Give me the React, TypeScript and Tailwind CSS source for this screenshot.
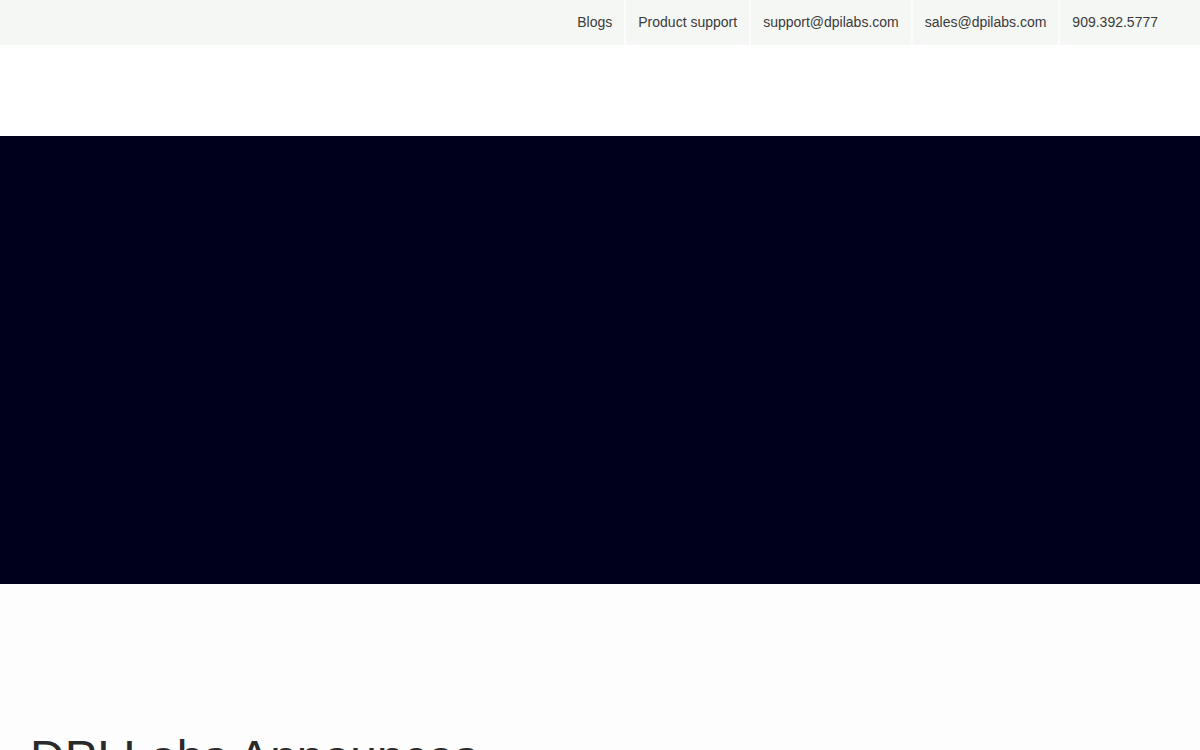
import React from "react";

const items = ["Blogs", "Product support", "support@dpilabs.com", "sales@dpilabs.com", "909.392.5777"];

export default function App() {
  return (
    <div className="w-full min-h-[750px] bg-white" style={{ fontFamily: '"Liberation Sans", Arial, sans-serif' }}>
      <div className="h-[45px] bg-[#f5f7f5] flex justify-end pr-[30px]">
        {items.map((t, i) => (
          <div key={t} className={`flex items-center h-full px-[12px] text-[14px] text-[#3a3a3a] ${i > 0 ? "border-l-2 border-[#fbfcfb]" : ""}`}>
            {t}
          </div>
        ))}
      </div>
      <div className="h-[91px] bg-white" />
      <div className="h-[448px] bg-[#00001a]" />
      <div className="bg-[#fdfdfd] pt-[145px] px-[30px] h-[166px] overflow-hidden">
        <h1 className="text-[48px] leading-[1.2] text-[#2a2a2a] font-normal">DPI Labs Announces</h1>
      </div>
    </div>
  );
}
